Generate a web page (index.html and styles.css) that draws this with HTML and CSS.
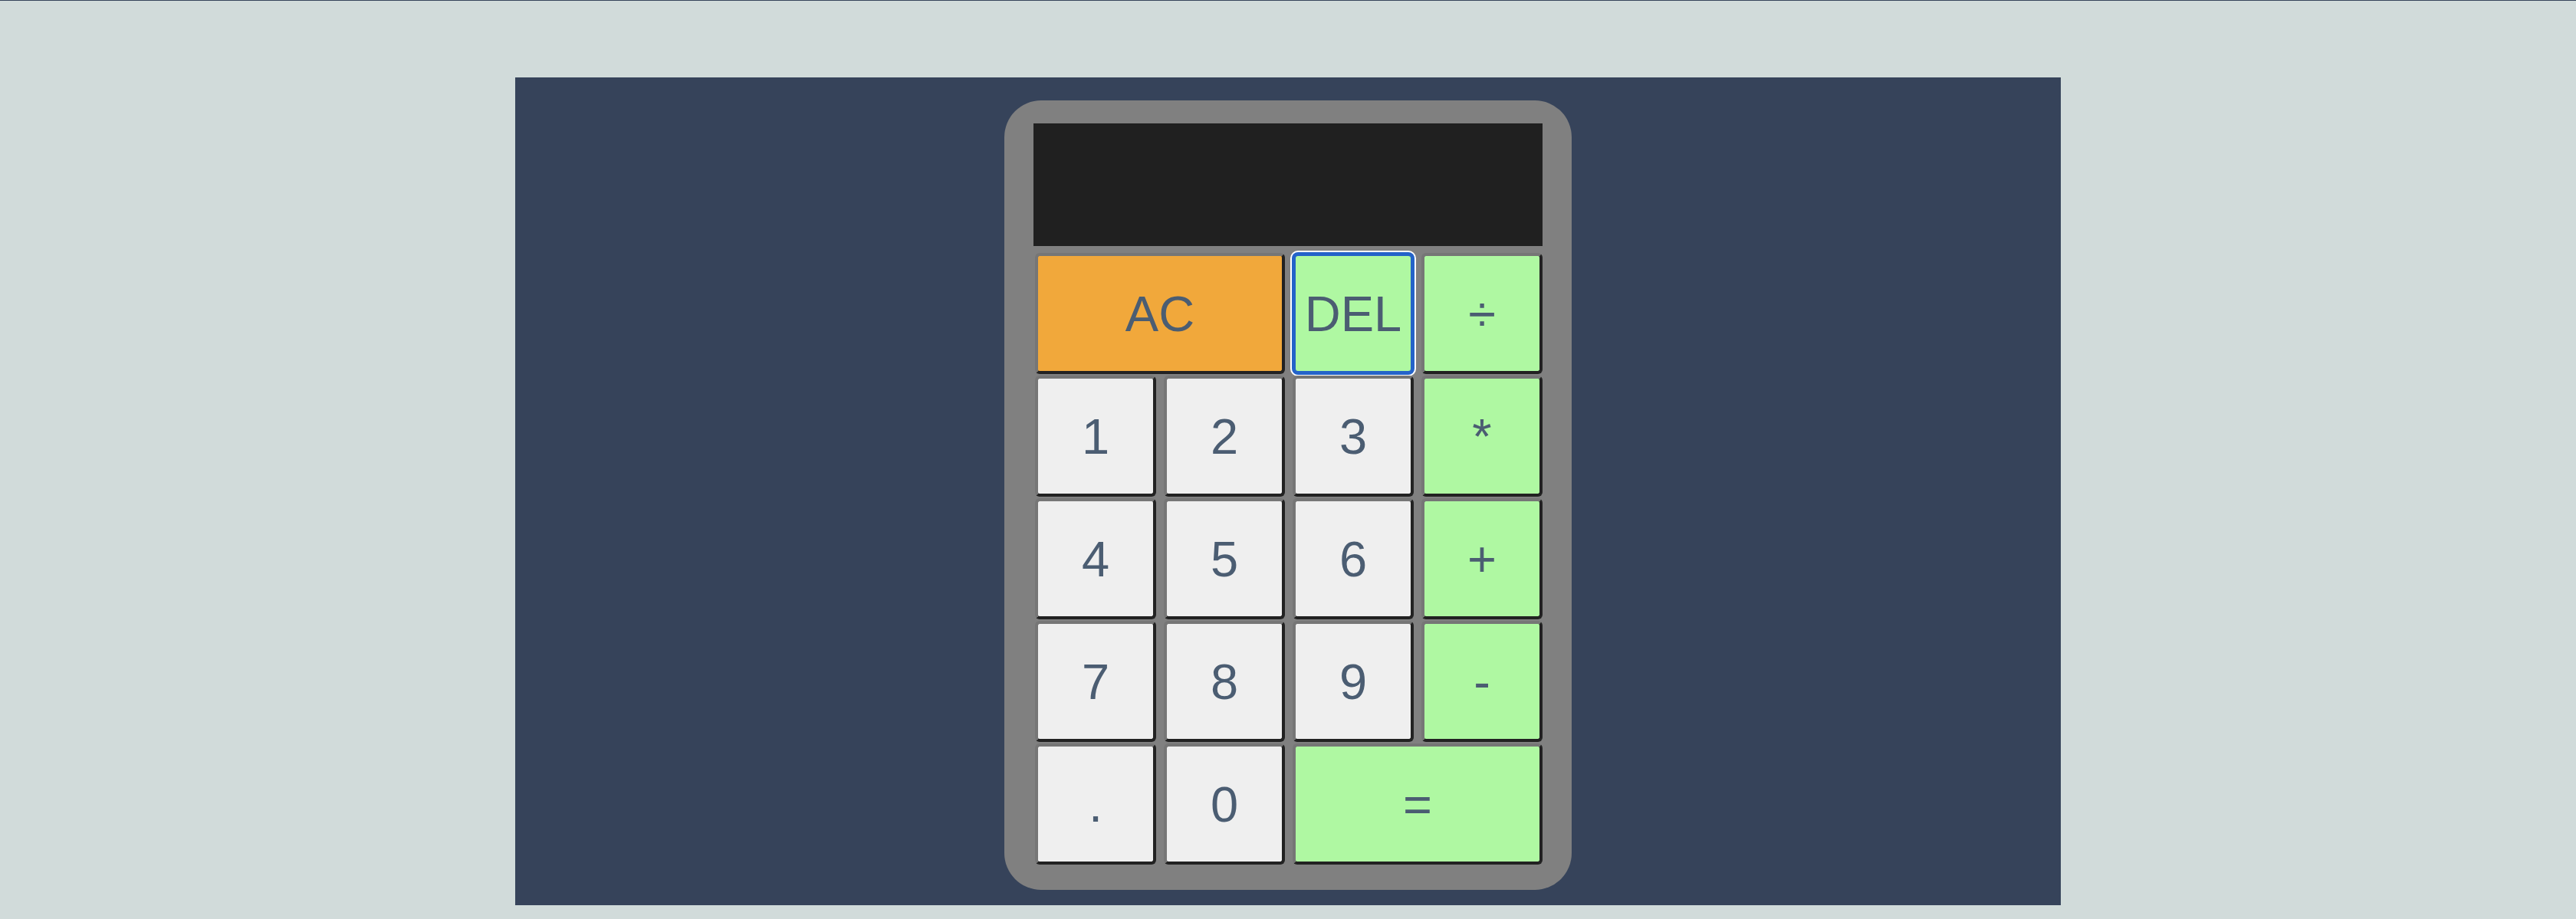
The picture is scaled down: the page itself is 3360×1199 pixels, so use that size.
FILE: index.html
```html
<!DOCTYPE html>
<html lang="en">
<head>
<meta charset="utf-8">
<title>Calculator</title>
<link rel="stylesheet" href="styles.css">
</head>
<body>
  <main class="stage">
    <div class="calculator">
      <div class="screen"></div>
      <div class="keys">
        <button class="key key-clear span-two">AC</button>
        <button class="key key-op key-focused">DEL</button>
        <button class="key key-op">÷</button>
        <button class="key">1</button>
        <button class="key">2</button>
        <button class="key">3</button>
        <button class="key key-op">*</button>
        <button class="key">4</button>
        <button class="key">5</button>
        <button class="key">6</button>
        <button class="key key-op">+</button>
        <button class="key">7</button>
        <button class="key">8</button>
        <button class="key">9</button>
        <button class="key key-op">-</button>
        <button class="key">.</button>
        <button class="key">0</button>
        <button class="key key-op span-two">=</button>
      </div>
    </div>
  </main>
</body>
</html>
```
FILE: styles.css
```css
* {
  box-sizing: border-box;
}

html, body {
  margin: 0;
  padding: 0;
}

body {
  background: #d1dbda;
  border-top: 1px solid #36435a;
  min-height: 1199px;
  font-family: "Liberation Sans", Arial, sans-serif;
}

.stage {
  width: 2016px;
  height: 1080px;
  margin: 100px auto 0;
  background: #36435a;
  padding-top: 30px;
}

.calculator {
  width: 740px;
  margin: 0 auto;
  padding: 30px 38px 33px 38px;
  background: #808080;
  border-radius: 48px;
}

.screen {
  height: 160px;
  background: #202020;
}

.keys {
  display: grid;
  grid-template-columns: repeat(4, 158px);
  grid-auto-rows: 158px;
  column-gap: 10px;
  row-gap: 2px;
  margin: 9px 0 0 2px;
}

.key {
  font-family: "Liberation Sans", Arial, sans-serif;
  font-size: 65px;
  color: #4b5d72;
  background: #efefef;
  border-width: 4px;
  border-style: solid;
  border-color: #767676 #222222 #222222 #767676;
  border-radius: 6px;
  padding: 0;
  margin: 0;
  cursor: pointer;
}

.key-op {
  background: #aff8a2;
}

.key-clear {
  background: #f1a83b;
}

.span-two {
  grid-column: span 2;
}

.key-focused {
  border-color: #2463c9;
  box-shadow: 0 0 0 1px #2463c9, 0 0 0 3px #ffffff;
  border-radius: 7px;
}
```
